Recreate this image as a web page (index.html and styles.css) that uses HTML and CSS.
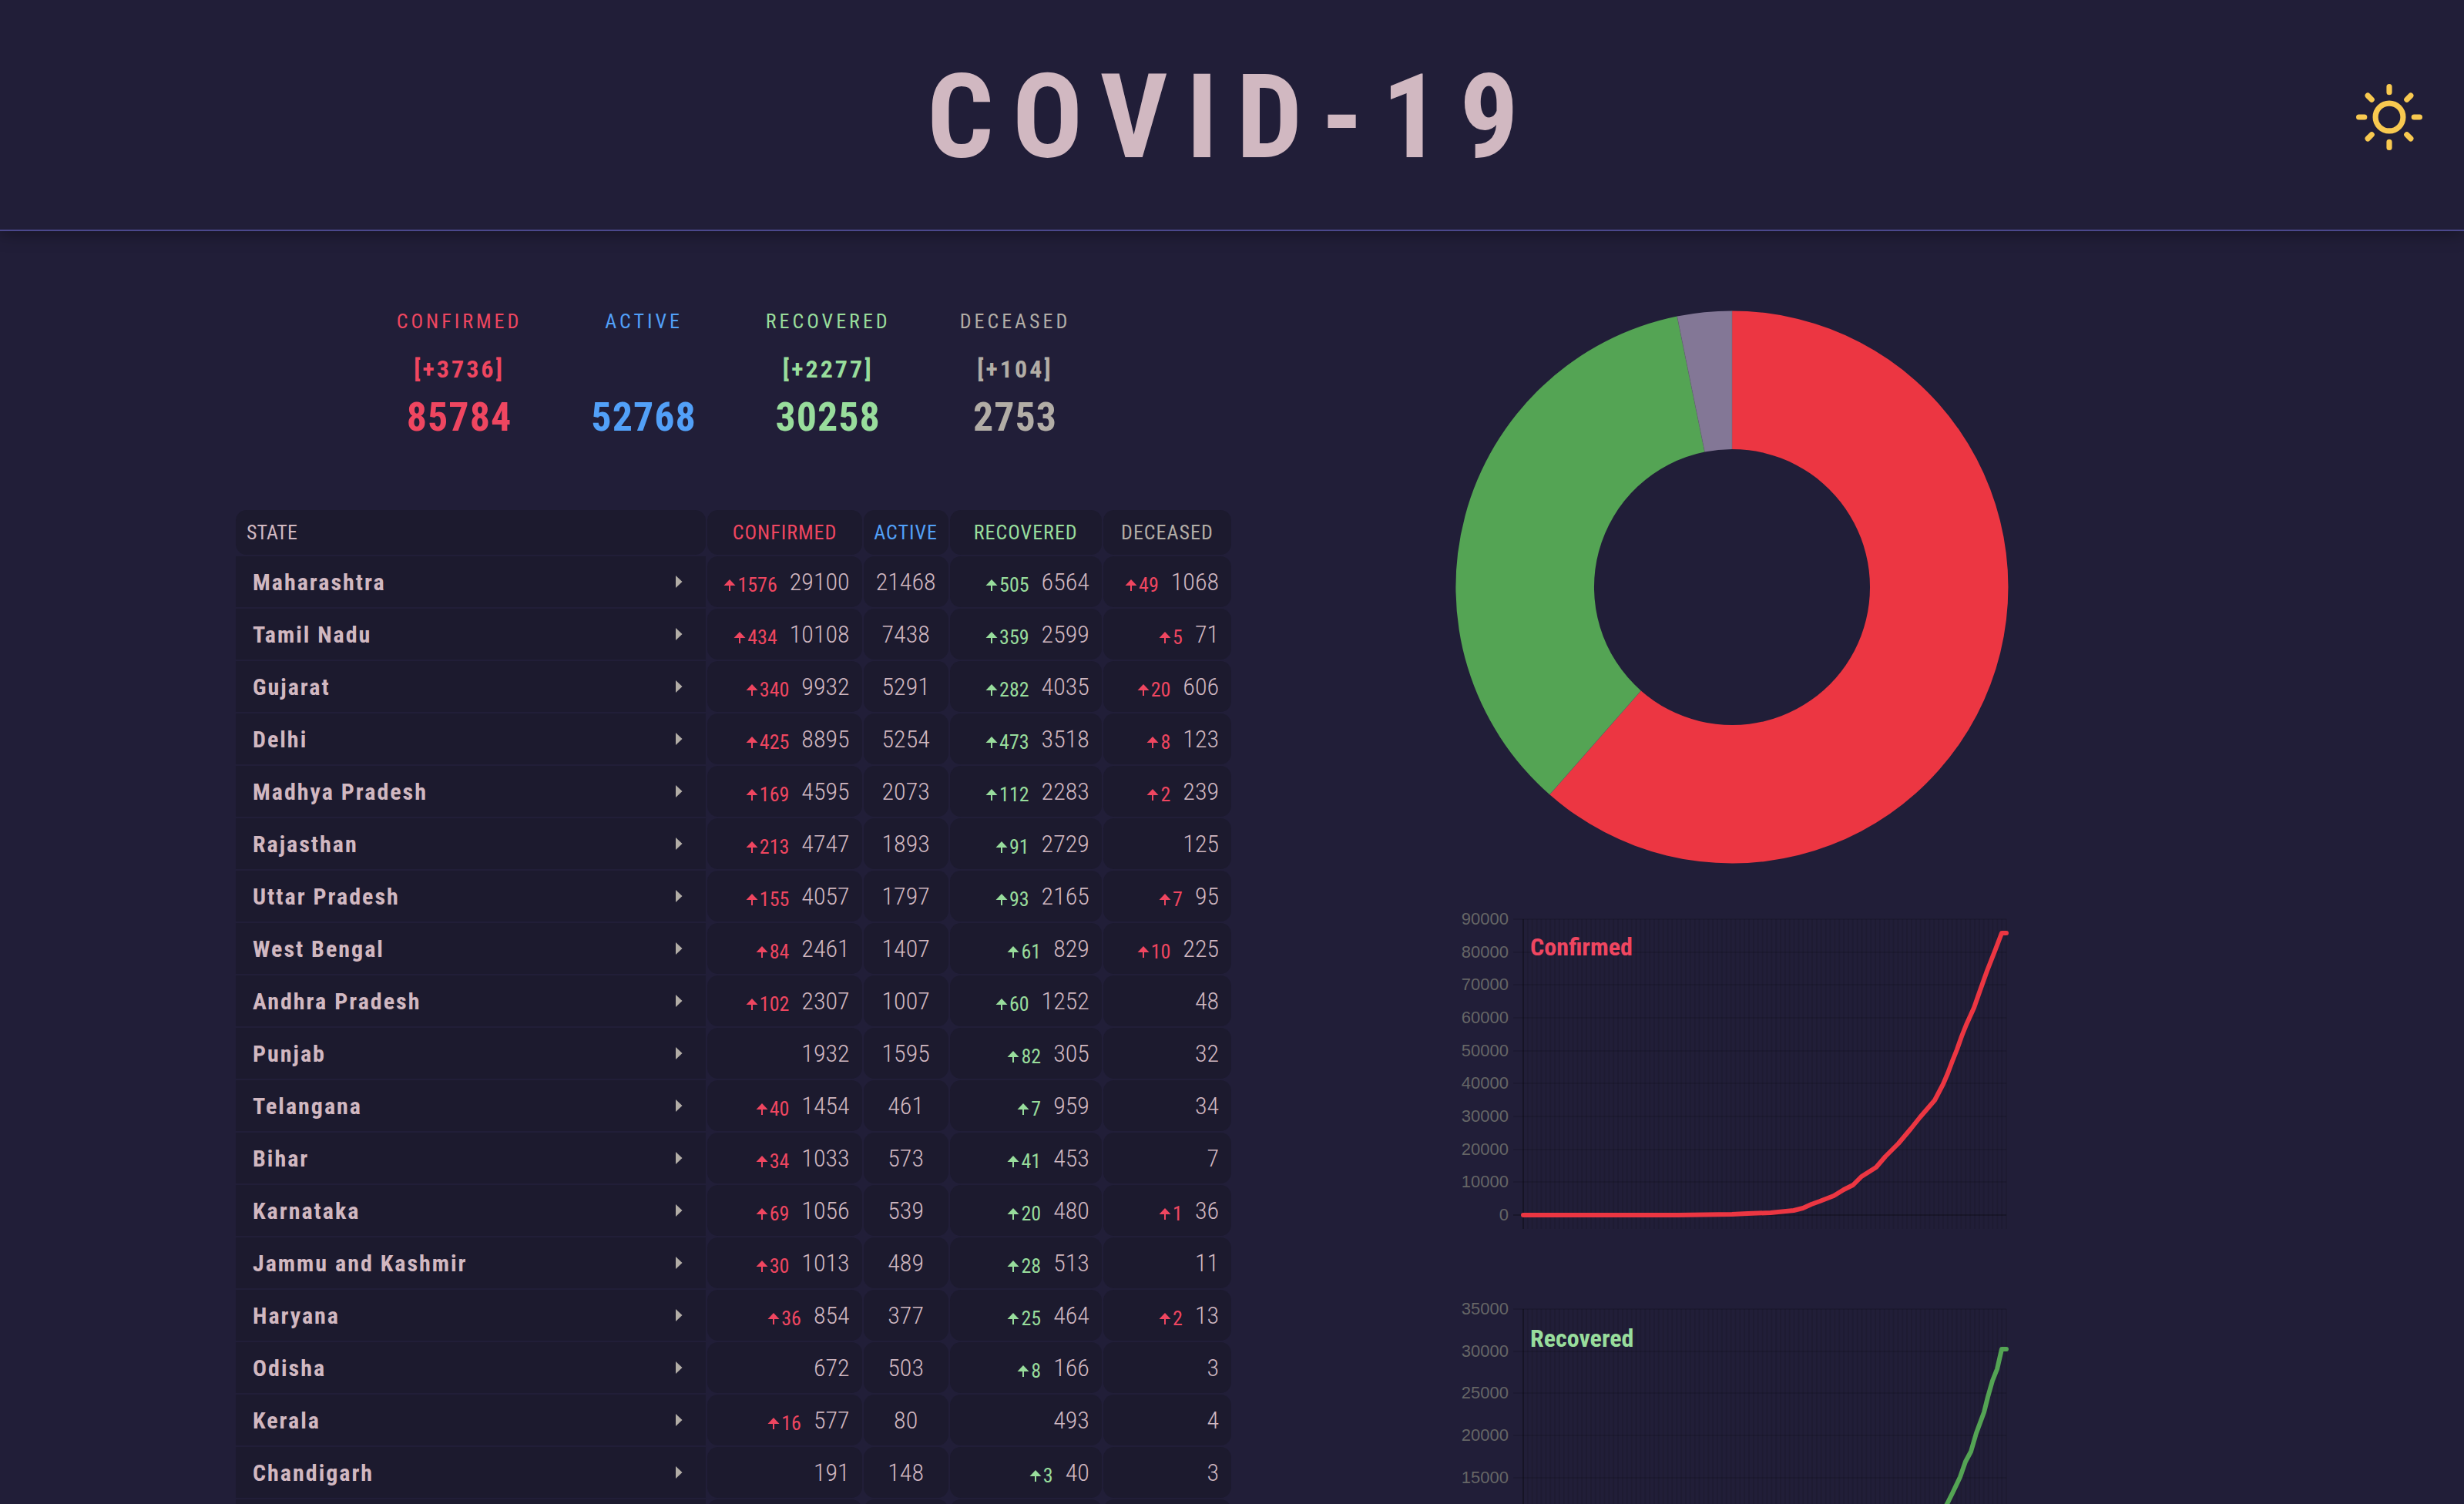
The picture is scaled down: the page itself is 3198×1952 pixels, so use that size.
FILE: index.html
```html
<!DOCTYPE html>
<html lang="en">
<head>
<meta charset="utf-8">
<meta name="viewport" content="width=device-width, initial-scale=1">
<title>COVID-19</title>
<link rel="stylesheet" href="styles.css">
</head>
<body>
<svg class="sprite" aria-hidden="true">
  <symbol id="up" viewBox="0 0 16 16"><path d="M8 1 15.500 9H9v7H7V9H.5z" fill="currentColor"/></symbol>
  <symbol id="caret" viewBox="0 0 10 18"><path d="M1 1 9.500 9 1 17z" fill="currentColor"/></symbol>
</svg>

<header class="topbar">
  <h1 class="title">COVID-19</h1>
  <button class="theme" type="button" aria-label="Light theme">
    <svg class="sun" viewBox="0 0 24 24" fill="none" stroke="currentColor" stroke-width="2" stroke-linecap="round">
      <circle cx="12" cy="12" r="5"/>
      <path d="M12 1v2M12 21v2M1 12h2M21 12h2M4.220 4.220l1.420 1.420M18.360 18.360l1.420 1.420M4.220 19.780l1.420-1.420M18.360 5.640l1.420-1.420"/>
    </svg>
  </button>
</header>

<main class="dashboard">
  <section class="summary">
    <div class="stats">
      <div class="stat confirmed"><h2 class="stat-name">CONFIRMED</h2><p class="stat-change">[+3736]</p><p class="stat-total">85784</p></div>
      <div class="stat active"><h2 class="stat-name">ACTIVE</h2><p class="stat-change"></p><p class="stat-total">52768</p></div>
      <div class="stat recovered"><h2 class="stat-name">RECOVERED</h2><p class="stat-change">[+2277]</p><p class="stat-total">30258</p></div>
      <div class="stat deceased"><h2 class="stat-name">DECEASED</h2><p class="stat-change">[+104]</p><p class="stat-total">2753</p></div>
    </div>

    <table class="states">
      <colgroup><col class="c-state"><col class="c-confirmed"><col class="c-active"><col class="c-recovered"><col class="c-deceased"></colgroup>
      <thead>
        <tr><th scope="col" class="state-head">STATE</th><th scope="col" class="confirmed">CONFIRMED</th><th scope="col" class="active">ACTIVE</th><th scope="col" class="recovered">RECOVERED</th><th scope="col" class="deceased">DECEASED</th></tr>
      </thead>
      <tbody>
        <tr><th scope="row"><div class="state">Maharashtra<svg class="caret"><use href="#caret"/></svg></div></th><td><span class="delta confirmed"><svg class="up"><use href="#up"/></svg>1576</span>29100</td><td>21468</td><td><span class="delta recovered"><svg class="up"><use href="#up"/></svg>505</span>6564</td><td><span class="delta confirmed"><svg class="up"><use href="#up"/></svg>49</span>1068</td></tr>
        <tr><th scope="row"><div class="state">Tamil Nadu<svg class="caret"><use href="#caret"/></svg></div></th><td><span class="delta confirmed"><svg class="up"><use href="#up"/></svg>434</span>10108</td><td>7438</td><td><span class="delta recovered"><svg class="up"><use href="#up"/></svg>359</span>2599</td><td><span class="delta confirmed"><svg class="up"><use href="#up"/></svg>5</span>71</td></tr>
        <tr><th scope="row"><div class="state">Gujarat<svg class="caret"><use href="#caret"/></svg></div></th><td><span class="delta confirmed"><svg class="up"><use href="#up"/></svg>340</span>9932</td><td>5291</td><td><span class="delta recovered"><svg class="up"><use href="#up"/></svg>282</span>4035</td><td><span class="delta confirmed"><svg class="up"><use href="#up"/></svg>20</span>606</td></tr>
        <tr><th scope="row"><div class="state">Delhi<svg class="caret"><use href="#caret"/></svg></div></th><td><span class="delta confirmed"><svg class="up"><use href="#up"/></svg>425</span>8895</td><td>5254</td><td><span class="delta recovered"><svg class="up"><use href="#up"/></svg>473</span>3518</td><td><span class="delta confirmed"><svg class="up"><use href="#up"/></svg>8</span>123</td></tr>
        <tr><th scope="row"><div class="state">Madhya Pradesh<svg class="caret"><use href="#caret"/></svg></div></th><td><span class="delta confirmed"><svg class="up"><use href="#up"/></svg>169</span>4595</td><td>2073</td><td><span class="delta recovered"><svg class="up"><use href="#up"/></svg>112</span>2283</td><td><span class="delta confirmed"><svg class="up"><use href="#up"/></svg>2</span>239</td></tr>
        <tr><th scope="row"><div class="state">Rajasthan<svg class="caret"><use href="#caret"/></svg></div></th><td><span class="delta confirmed"><svg class="up"><use href="#up"/></svg>213</span>4747</td><td>1893</td><td><span class="delta recovered"><svg class="up"><use href="#up"/></svg>91</span>2729</td><td>125</td></tr>
        <tr><th scope="row"><div class="state">Uttar Pradesh<svg class="caret"><use href="#caret"/></svg></div></th><td><span class="delta confirmed"><svg class="up"><use href="#up"/></svg>155</span>4057</td><td>1797</td><td><span class="delta recovered"><svg class="up"><use href="#up"/></svg>93</span>2165</td><td><span class="delta confirmed"><svg class="up"><use href="#up"/></svg>7</span>95</td></tr>
        <tr><th scope="row"><div class="state">West Bengal<svg class="caret"><use href="#caret"/></svg></div></th><td><span class="delta confirmed"><svg class="up"><use href="#up"/></svg>84</span>2461</td><td>1407</td><td><span class="delta recovered"><svg class="up"><use href="#up"/></svg>61</span>829</td><td><span class="delta confirmed"><svg class="up"><use href="#up"/></svg>10</span>225</td></tr>
        <tr><th scope="row"><div class="state">Andhra Pradesh<svg class="caret"><use href="#caret"/></svg></div></th><td><span class="delta confirmed"><svg class="up"><use href="#up"/></svg>102</span>2307</td><td>1007</td><td><span class="delta recovered"><svg class="up"><use href="#up"/></svg>60</span>1252</td><td>48</td></tr>
        <tr><th scope="row"><div class="state">Punjab<svg class="caret"><use href="#caret"/></svg></div></th><td>1932</td><td>1595</td><td><span class="delta recovered"><svg class="up"><use href="#up"/></svg>82</span>305</td><td>32</td></tr>
        <tr><th scope="row"><div class="state">Telangana<svg class="caret"><use href="#caret"/></svg></div></th><td><span class="delta confirmed"><svg class="up"><use href="#up"/></svg>40</span>1454</td><td>461</td><td><span class="delta recovered"><svg class="up"><use href="#up"/></svg>7</span>959</td><td>34</td></tr>
        <tr><th scope="row"><div class="state">Bihar<svg class="caret"><use href="#caret"/></svg></div></th><td><span class="delta confirmed"><svg class="up"><use href="#up"/></svg>34</span>1033</td><td>573</td><td><span class="delta recovered"><svg class="up"><use href="#up"/></svg>41</span>453</td><td>7</td></tr>
        <tr><th scope="row"><div class="state">Karnataka<svg class="caret"><use href="#caret"/></svg></div></th><td><span class="delta confirmed"><svg class="up"><use href="#up"/></svg>69</span>1056</td><td>539</td><td><span class="delta recovered"><svg class="up"><use href="#up"/></svg>20</span>480</td><td><span class="delta confirmed"><svg class="up"><use href="#up"/></svg>1</span>36</td></tr>
        <tr><th scope="row"><div class="state">Jammu and Kashmir<svg class="caret"><use href="#caret"/></svg></div></th><td><span class="delta confirmed"><svg class="up"><use href="#up"/></svg>30</span>1013</td><td>489</td><td><span class="delta recovered"><svg class="up"><use href="#up"/></svg>28</span>513</td><td>11</td></tr>
        <tr><th scope="row"><div class="state">Haryana<svg class="caret"><use href="#caret"/></svg></div></th><td><span class="delta confirmed"><svg class="up"><use href="#up"/></svg>36</span>854</td><td>377</td><td><span class="delta recovered"><svg class="up"><use href="#up"/></svg>25</span>464</td><td><span class="delta confirmed"><svg class="up"><use href="#up"/></svg>2</span>13</td></tr>
        <tr><th scope="row"><div class="state">Odisha<svg class="caret"><use href="#caret"/></svg></div></th><td>672</td><td>503</td><td><span class="delta recovered"><svg class="up"><use href="#up"/></svg>8</span>166</td><td>3</td></tr>
        <tr><th scope="row"><div class="state">Kerala<svg class="caret"><use href="#caret"/></svg></div></th><td><span class="delta confirmed"><svg class="up"><use href="#up"/></svg>16</span>577</td><td>80</td><td>493</td><td>4</td></tr>
        <tr><th scope="row"><div class="state">Chandigarh<svg class="caret"><use href="#caret"/></svg></div></th><td>191</td><td>148</td><td><span class="delta recovered"><svg class="up"><use href="#up"/></svg>3</span>40</td><td>3</td></tr>
        <tr><td></td><td></td><td></td><td></td><td></td></tr>
      </tbody>
    </table>
  </section>

  <section class="charts">
    <svg class="donut" viewBox="0 0 720 720" role="img" aria-label="Share of confirmed, recovered and deceased cases">
      <path fill="#ec3642" d="M360 1.500A358.500 358.500 0 1 1 123.300 629.300L241.800 494.400A179 179 0 1 0 360 181z"/>
      <path fill="#54a454" d="M123.300 629.300A358.500 358.500 0 0 1 288.700 8.600L324.500 184.500A179 179 0 0 0 241.800 494.400z"/>
      <path fill="#837796" d="M288.700 8.600A358.500 358.500 0 0 1 360 1.500V181A179 179 0 0 0 324.500 184.500z"/>
      <path fill="none" stroke="#6a6a74" stroke-opacity=".5" d="M123.300 629.300 241.800 494.400M288.700 8.600 324.500 184.500M360 1.500V181"/>
    </svg>

    <svg class="line-chart" viewBox="0 0 720 506" role="img" aria-label="Confirmed cases over time">
      <defs><pattern id="days" x="88" width="5.860" height="20" patternUnits="userSpaceOnUse"><path class="grid" d="M1 0v20"/></pattern></defs>
      <rect x="88" y="13" width="629" height="402" fill="url(#days)"/>
      <path class="grid" d="M76 13H716M76 56H716M76 98H716M76 141H716M76 184H716M76 226H716M76 269H716M76 312H716M76 354H716"/>
      <path class="axis" d="M89 13V415M76 397H716"/>
      <g class="ticks">
        <text x="70" y="20">90000</text><text x="70" y="63">80000</text><text x="70" y="105">70000</text><text x="70" y="148">60000</text><text x="70" y="191">50000</text><text x="70" y="233">40000</text><text x="70" y="276">30000</text><text x="70" y="319">20000</text><text x="70" y="361">10000</text><text x="70" y="404">0</text>
      </g>
      <polyline class="line" stroke="#ec3642" points="89,397 290,397 360,396 380,395 410,394 440,391 452,388 463,383 474,379 492,372 505,364 517,358 528,347 547,335 559,321 576,304 592,285 604,270 623,248 634,227 640,213 646,197 652,182 658,165 664,150 674,128 681,108 691,80 702,52 710,31 716,31"/>
      <text class="chart-name confirmed" x="98" y="60">Confirmed</text>
    </svg>

    <svg class="line-chart" viewBox="0 0 720 506" role="img" aria-label="Recovered cases over time">
      <rect x="88" y="13" width="629" height="402" fill="url(#days)"/>
      <path class="grid" d="M76 13H716M76 68H716M76 122H716M76 177H716M76 232H716M76 287H716M76 342H716"/>
      <path class="axis" d="M89 13V415M76 397H716"/>
      <g class="ticks">
        <text x="70" y="20">35000</text><text x="70" y="75">30000</text><text x="70" y="129">25000</text><text x="70" y="184">20000</text><text x="70" y="239">15000</text>
      </g>
      <polyline class="line" stroke="#54a454" points="89,397 440,395 560,360 610,315 639,266 646,252 656,231 663,211 670,198 677,174 687,147 692,127 698,106 704,91 710,65 716,65"/>
      <text class="chart-name recovered" x="98" y="62">Recovered</text>
    </svg>
  </section>
</main>
</body>
</html>
```
FILE: styles.css
```css
* { box-sizing: border-box; margin: 0; }

body {
  display: flex;
  flex-direction: column;
  height: 100vh;
  overflow: hidden;
  background: #211e38;
  color: #d1b8c1;
  font-family: "Roboto Condensed", "Liberation Sans", sans-serif;
}

.sprite { display: none; }

.confirmed { color: #ef4660; }
.active { color: #52a0f8; }
.recovered { color: #98dd9c; }
.deceased { color: #b2ada6; }

/* Header */
.topbar {
  display: grid;
  flex: none;
  grid-template-columns: 1fr auto 1fr;
  align-items: center;
  padding: 60px 0 54px;
  border-bottom: 2px solid #4b488c;
  box-shadow: 0 4px 20px rgba(0, 0, 0, .35);
}
.title {
  grid-column: 2;
  font-size: 152px;
  line-height: 184px;
  font-weight: 700;
  letter-spacing: 24px;
}
.theme {
  justify-self: end;
  margin-right: 54px;
  padding: 0;
  border: 0;
  background: none;
  color: #f8c950;
  cursor: pointer;
}
.sun { display: block; width: 86px; height: 86px; }

/* Page columns */
.dashboard {
  display: grid;
  flex: 1;
  min-height: 0;
  grid-template-columns: 304fr 1296fr 288fr 720fr 590fr;
  align-items: start;
  padding-top: 100px;
}
.summary { grid-column: 2; }
.charts { grid-column: 4; }

/* Totals */
.stats {
  display: flex;
  justify-content: center;
  gap: 90px;
  margin-bottom: 88px;
}
.stat { min-width: 136px; text-align: center; }
.stat-name {
  font-size: 26px;
  line-height: 34px;
  font-weight: 400;
  letter-spacing: 4px;
}
.stat-change {
  height: 40px;
  margin: 25px 0 13px;
  font-size: 32px;
  line-height: 40px;
  font-weight: 700;
  letter-spacing: 3px;
}
.stat-total {
  font-size: 52px;
  line-height: 60px;
  font-weight: 700;
  letter-spacing: 1px;
}

/* State table */
.states {
  width: 100%;
  table-layout: fixed;
  border-collapse: separate;
  border-spacing: 2px;
}
.c-state { width: 610px; }
.c-confirmed { width: 200px; }
.c-active { width: 110px; }
.c-recovered { width: 197px; }
.c-deceased { width: 166px; }

.states th, .states td {
  padding: 0 16px 0 0;
  background: #1c1a2e;
  border-radius: 14px;
}
.states thead th {
  height: 58px;
  padding: 0;
  font-size: 26px;
  font-weight: 400;
  letter-spacing: 1px;
}
.states thead .state-head {
  padding-left: 14px;
  text-align: left;
  letter-spacing: 0;
}
.states tbody th, .states tbody td:first-child { border-radius: 0; }
.states tbody th { padding: 0 30px 0 22px; }
.states tbody td {
  height: 66px;
  font-size: 32px;
  font-weight: 300;
  text-align: right;
}
.states tbody td:nth-child(3) { padding: 0; text-align: center; }
.state {
  display: flex;
  justify-content: space-between;
  align-items: center;
  font-size: 30px;
  font-weight: 700;
  letter-spacing: 2px;
}
.caret { width: 10px; height: 18px; color: #b2ada6; }
.delta {
  margin-right: 16px;
  font-size: 26px;
  font-weight: 400;
  vertical-align: -2px;
}
.up { width: 16px; height: 16px; margin-right: 2px; vertical-align: 1px; }

/* Charts */
.donut, .line-chart { display: block; width: 100%; }
.donut { margin: 2px 0 58px; }
.grid { fill: none; stroke: rgba(0, 0, 0, .1); stroke-width: 2; }
.axis { fill: none; stroke: rgba(0, 0, 0, .25); stroke-width: 2; }
.ticks { fill: #666; font: 22px "Liberation Sans", sans-serif; text-anchor: end; }
.line { fill: none; stroke-width: 6; stroke-linecap: round; stroke-linejoin: round; }
.chart-name { fill: currentColor; font-size: 32px; font-weight: 700; }
```
